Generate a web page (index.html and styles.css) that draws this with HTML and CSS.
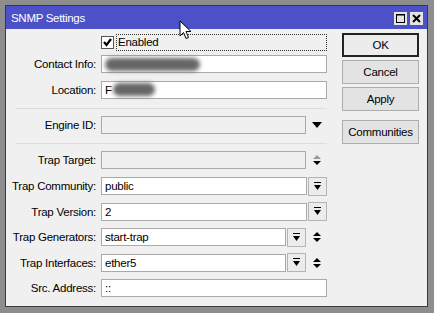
FILE: index.html
```html
<!DOCTYPE html>
<html lang="en">
<head>
    <meta charset="UTF-8">
    <title>SNMP Settings</title>
    <link rel="stylesheet" href="styles.css">
</head>
<body>

    <div class="window">
        <!-- Title bar -->
        <div class="titlebar">
            <span class="title">SNMP Settings</span>
            <div class="title-buttons">
                <span class="tbtn">
                    <svg width="11" height="11" viewBox="0 0 11 11"><rect x="1.5" y="1.5" width="8" height="8" fill="none" stroke="#000" stroke-width="1"/><line x1="1" y1="2" x2="10" y2="2" stroke="#000" stroke-width="1"/></svg>
                </span>
                <span class="tbtn">
                    <svg width="11" height="11" viewBox="0 0 11 11"><path d="M2 2 L9 9 M9 2 L2 9" stroke="#000" stroke-width="2"/></svg>
                </span>
            </div>
        </div>

        <div class="content">
            <!-- Form fields -->
            <div class="form">
                <div class="row check-row">
                    <span></span>
                    <label class="check">
                        <span class="box">
                            <svg width="11" height="11" viewBox="0 0 11 11"><path d="M2 5 L4.5 8 L9 2" fill="none" stroke="#000" stroke-width="2.2"/></svg>
                        </span>
                        <span class="check-text">Enabled</span>
                    </label>
                </div>

                <div class="row">
                    <span class="lbl">Contact Info:</span>
                    <div class="field"><span class="blur blur-long"></span></div>
                </div>
                <div class="row">
                    <span class="lbl">Location:</span>
                    <div class="field">F<span class="blur blur-short"></span></div>
                </div>

                <div class="sep"></div>

                <div class="row">
                    <span class="lbl">Engine ID:</span>
                    <div class="line">
                        <div class="field disabled"></div>
                        <span class="arrow">
                            <svg width="10" height="6" viewBox="0 0 10 6"><path d="M0 0 H10 L5 6 Z" fill="#000"/></svg>
                        </span>
                    </div>
                </div>

                <div class="sep second"></div>

                <div class="row">
                    <span class="lbl">Trap Target:</span>
                    <div class="line">
                        <div class="field disabled"></div>
                        <span class="arrow">
                            <svg width="10" height="12" viewBox="0 0 10 12"><path d="M1 5 H9 L5 1 Z" fill="#999"/><path d="M1 7 H9 L5 11 Z" fill="#000"/></svg>
                        </span>
                    </div>
                </div>
                <div class="row">
                    <span class="lbl">Trap Community:</span>
                    <div class="line">
                        <div class="field">public</div>
                        <span class="dd">
                            <svg width="9" height="9" viewBox="0 0 9 9"><rect x="1" y="0" width="7" height="1" fill="#000"/><path d="M1 3 H8 L4.5 8 Z" fill="#000"/></svg>
                        </span>
                    </div>
                </div>
                <div class="row">
                    <span class="lbl">Trap Version:</span>
                    <div class="line">
                        <div class="field">2</div>
                        <span class="dd">
                            <svg width="9" height="9" viewBox="0 0 9 9"><rect x="1" y="0" width="7" height="1" fill="#000"/><path d="M1 3 H8 L4.5 8 Z" fill="#000"/></svg>
                        </span>
                    </div>
                </div>
                <div class="row">
                    <span class="lbl">Trap Generators:</span>
                    <div class="line">
                        <div class="field">start-trap</div>
                        <span class="dd">
                            <svg width="9" height="9" viewBox="0 0 9 9"><rect x="1" y="0" width="7" height="1" fill="#000"/><path d="M1 3 H8 L4.5 8 Z" fill="#000"/></svg>
                        </span>
                        <span class="arrow">
                            <svg width="10" height="12" viewBox="0 0 10 12"><path d="M1 5 H9 L5 1 Z" fill="#000"/><path d="M1 7 H9 L5 11 Z" fill="#000"/></svg>
                        </span>
                    </div>
                </div>
                <div class="row">
                    <span class="lbl">Trap Interfaces:</span>
                    <div class="line">
                        <div class="field">ether5</div>
                        <span class="dd">
                            <svg width="9" height="9" viewBox="0 0 9 9"><rect x="1" y="0" width="7" height="1" fill="#000"/><path d="M1 3 H8 L4.5 8 Z" fill="#000"/></svg>
                        </span>
                        <span class="arrow">
                            <svg width="10" height="12" viewBox="0 0 10 12"><path d="M1 5 H9 L5 1 Z" fill="#000"/><path d="M1 7 H9 L5 11 Z" fill="#000"/></svg>
                        </span>
                    </div>
                </div>
                <div class="row">
                    <span class="lbl">Src. Address:</span>
                    <div class="field">::</div>
                </div>
            </div>

            <!-- Buttons -->
            <div class="buttons">
                <button class="btn default">OK</button>
                <button class="btn">Cancel</button>
                <button class="btn">Apply</button>
                <button class="btn spaced">Communities</button>
            </div>
        </div>

        <!-- mouse pointer -->
        <svg class="cursor" width="14" height="20" viewBox="0 0 14 20"><path d="M1 1 V16 L4.5 12.5 L7 18.5 L9.5 17.5 L7 11.5 H12 Z" fill="#fff" stroke="#000" stroke-width="1"/></svg>
    </div>

</body>
</html>
```

FILE: styles.css
```css
body {
    margin: 0;
    padding: 0;
    background-color: #8d8d8d;
    font-family: "Liberation Sans", Arial, sans-serif;
    font-size: 11.5px;
    letter-spacing: -0.25px;
    color: #000;
}
.window {
    position: relative;
    margin: 5px 0 0 5px;
    width: 421px;
    height: 300px;
    border: 1px solid #3a3a3a;
    background-color: #f0f0f0;
}
.titlebar {
    height: 23px;
    background-color: #4d51c8;
    display: flex;
    align-items: center;
    justify-content: space-between;
    padding: 0 4px 0 5px;
}
.title {
    color: white;
    font-size: 11.5px;
    letter-spacing: -0.3px;
}
.title-buttons {
    display: flex;
    gap: 3px;
    margin-top: 1px;
}
.tbtn {
    width: 13px;
    height: 13px;
    background-color: #e4e4e4;
    display: flex;
    align-items: center;
    justify-content: center;
}
.content {
    display: flex;
    padding-top: 4px;
}
.form {
    width: 321px;
    display: flex;
    flex-direction: column;
    padding-top: 1px;
}
.row {
    display: grid;
    grid-template-columns: 90px 226px;
    column-gap: 5px;
    align-items: center;
    height: 18px;
    margin-bottom: 7.5px;
}
.check-row {
    height: 17px;
    margin-bottom: 4px;
}
.lbl {
    text-align: right;
    white-space: nowrap;
}
.check {
    display: flex;
    align-items: center;
    gap: 2px;
}
.box {
    width: 11px;
    height: 11px;
    border: 1px solid #555;
    background: white;
    display: flex;
}
.check-text {
    flex: 1;
    border: 1px dotted #333;
    height: 15px;
    line-height: 15px;
    padding-left: 1px;
}
.field {
    height: 16px;
    line-height: 16px;
    border: 1px solid #a9a9a9;
    background: white;
    padding-left: 3px;
    box-sizing: content-box;
    display: flex;
    align-items: center;
}
.field.disabled {
    background: #f0f0f0;
}
.line {
    display: flex;
    align-items: center;
}
.line .field {
    flex: 1;
}
.dd {
    width: 17px;
    height: 17px;
    border: 1px solid #b4b4b4;
    background: #ececec;
    margin-left: 1px;
    display: flex;
    align-items: center;
    justify-content: center;
}
.arrow {
    width: 21px;
    display: flex;
    justify-content: center;
}
.sep {
    height: 1px;
    background: #dcdcdc;
    margin: 2px 0 7px 10px;
    width: 311px;
}
.sep.second {
    margin-top: 1.5px;
}
.blur {
    display: inline-block;
    height: 13px;
    background: #666;
    border-radius: 7px;
    filter: blur(2px);
}
.blur-long {
    width: 95px;
}
.blur-short {
    width: 42px;
    margin-left: 1px;
}
.buttons {
    margin-left: 15px;
    display: flex;
    flex-direction: column;
    gap: 3px;
}
.btn {
    width: 77px;
    height: 24px;
    font-family: "Liberation Sans", Arial, sans-serif;
    font-size: 11.5px;
    letter-spacing: -0.25px;
    background: #e3e3e3;
    border: 1px solid #adadad;
    padding: 0;
}
.btn.default {
    border: 2px solid #222;
    background: #ececec;
}
.btn.spaced {
    margin-top: 6px;
}
.cursor {
    position: absolute;
    left: 173px;
    top: 14px;
}
```
